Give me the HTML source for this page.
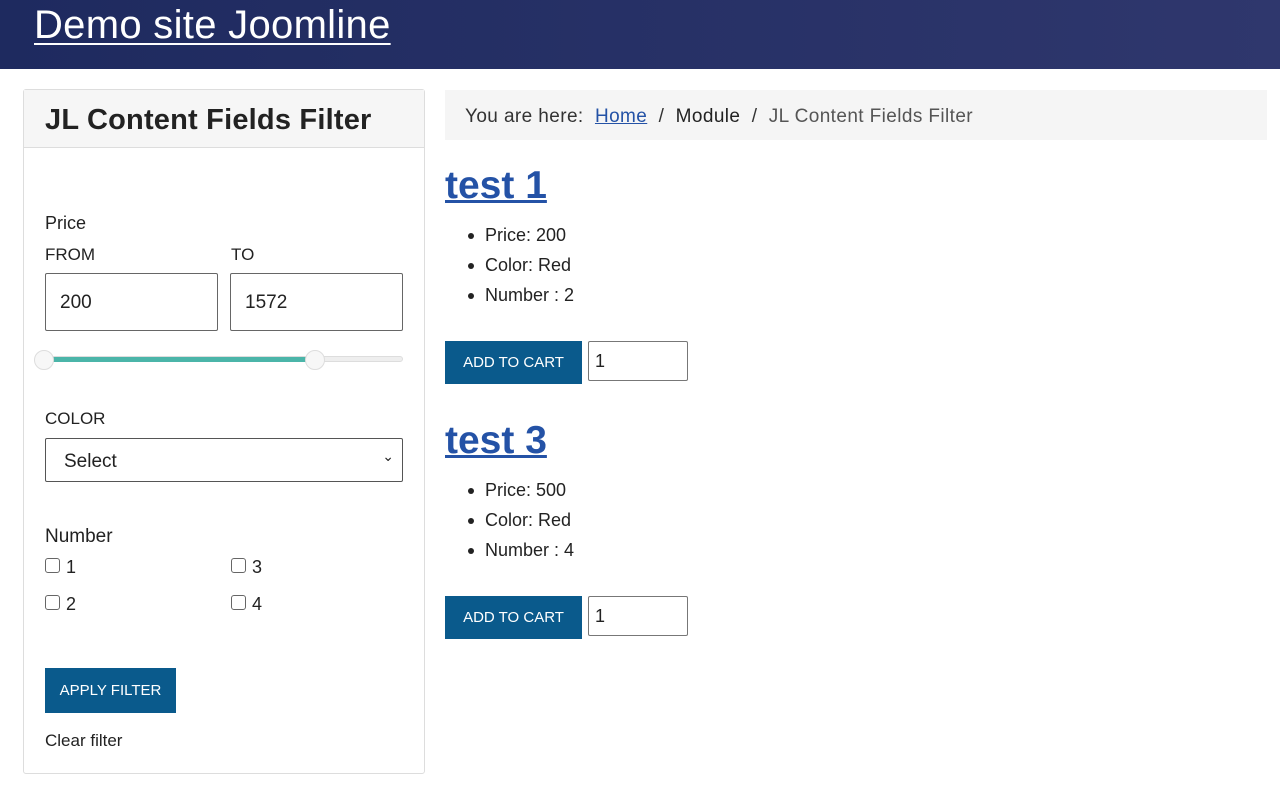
<!DOCTYPE html>
<html><head><meta charset="utf-8"><style>
*{box-sizing:border-box;margin:0;padding:0}
body{width:1280px;height:802px;background:#fff;font-family:"Liberation Sans",sans-serif;color:#222;position:relative;overflow:hidden}
.a{position:absolute;white-space:nowrap}
.hdr{left:0;top:0;width:1280px;height:69px;background:linear-gradient(90deg,#1e2a5f,#2f376d)}
.hdr span{left:34px;top:3px;font-size:40px;color:#fff;text-decoration:underline;text-decoration-thickness:2px;text-underline-offset:5px;letter-spacing:0.3px}
.card{left:23px;top:89px;width:402px;height:685px;border:1px solid #ddd;border-radius:3px}
.ch{left:24px;top:90px;width:400px;height:58px;background:#f6f6f6;border-bottom:1px solid #ddd}
.inp{border:1px solid #666;border-radius:2px;height:58px;width:173px;font-size:19px;padding:18px 14px}
.btn{background:#0a5a8c;color:#fff;font-size:15px;text-align:center}
.cb{width:15px;height:15px;border:1px solid #666;border-radius:3px}
.lbl{font-size:18px}
h2{font-size:39px;color:#2452a6;text-decoration:underline;font-weight:bold}
li{font-size:19px}
.dot{width:6px;height:6px;border-radius:50%;background:#222}
.q{border:1px solid #777;border-radius:2px;width:100px;height:40px;font-size:18px;padding:9px 6px}
</style></head><body>
<div class="a hdr"><span class="a">Demo site Joomline</span></div>
<div class="a card"></div>
<div class="a ch"></div>
<div class="a" style="left:45px;top:104px;font-size:29px;font-weight:bold;color:#222;letter-spacing:0.2px">JL Content Fields Filter</div>
<div class="a lbl" style="left:45px;top:213px">Price</div>
<div class="a" style="left:45px;top:245px;font-size:17px">FROM</div>
<div class="a" style="left:231px;top:245px;font-size:17px">TO</div>
<div class="a inp" style="left:45px;top:273px">200</div>
<div class="a inp" style="left:230px;top:273px">1572</div>
<div class="a" style="left:44px;top:356px;width:359px;height:6px;background:#eee;border:1px solid #ddd;border-radius:3px"></div>
<div class="a" style="left:44px;top:357px;width:272px;height:5px;background:#4bb5a9"></div>
<div class="a" style="left:34px;top:350px;width:20px;height:20px;border-radius:50%;background:#f7f7f7;border:1px solid #ddd"></div>
<div class="a" style="left:305px;top:350px;width:20px;height:20px;border-radius:50%;background:#f7f7f7;border:1px solid #ddd"></div>
<div class="a" style="left:45px;top:409px;font-size:17px">COLOR</div>
<div class="a" style="left:45px;top:438px;width:358px;height:44px;border:1px solid #555;border-radius:2px;font-size:19px;padding:12px 18px">Select<span class="a" style="right:8px;top:9px;font-size:14px">&#8964;</span></div>
<div class="a lbl" style="left:45px;top:526px;font-size:19px">Number</div>
<div class="a cb" style="left:45px;top:558px"></div><div class="a lbl" style="left:66px;top:557px">1</div>
<div class="a cb" style="left:231px;top:558px"></div><div class="a lbl" style="left:252px;top:557px">3</div>
<div class="a cb" style="left:45px;top:595px"></div><div class="a lbl" style="left:66px;top:594px">2</div>
<div class="a cb" style="left:231px;top:595px"></div><div class="a lbl" style="left:252px;top:594px">4</div>
<div class="a btn" style="left:45px;top:668px;width:131px;height:45px;line-height:45px">APPLY FILTER</div>
<div class="a" style="left:45px;top:731px;font-size:17px">Clear filter</div>

<div class="a" style="left:445px;top:90px;width:822px;height:50px;background:#f5f5f5"></div>
<div class="a" style="left:465px;top:106px;font-size:19px;color:#333;letter-spacing:0.4px">You are here:&nbsp; <span style="color:#2452a6;text-decoration:underline">Home</span> &nbsp;/&nbsp; <span style="color:#222">Module</span> &nbsp;/&nbsp; <span style="color:#555">JL Content Fields Filter</span></div>

<h2 class="a" style="left:445px;top:164px">test 1</h2>
<div class="a dot" style="left:468px;top:233px"></div><div class="a lbl" style="left:485px;top:225px">Price: 200</div>
<div class="a dot" style="left:468px;top:263px"></div><div class="a lbl" style="left:485px;top:255px">Color: Red</div>
<div class="a dot" style="left:468px;top:293px"></div><div class="a lbl" style="left:485px;top:285px">Number : 2</div>
<div class="a btn" style="left:445px;top:341px;width:137px;height:43px;line-height:43px">ADD TO CART</div>
<div class="a q" style="left:588px;top:341px">1</div>

<h2 class="a" style="left:445px;top:419px">test 3</h2>
<div class="a dot" style="left:468px;top:488px"></div><div class="a lbl" style="left:485px;top:480px">Price: 500</div>
<div class="a dot" style="left:468px;top:518px"></div><div class="a lbl" style="left:485px;top:510px">Color: Red</div>
<div class="a dot" style="left:468px;top:548px"></div><div class="a lbl" style="left:485px;top:540px">Number : 4</div>
<div class="a btn" style="left:445px;top:596px;width:137px;height:43px;line-height:43px">ADD TO CART</div>
<div class="a q" style="left:588px;top:596px">1</div>
</body></html>
